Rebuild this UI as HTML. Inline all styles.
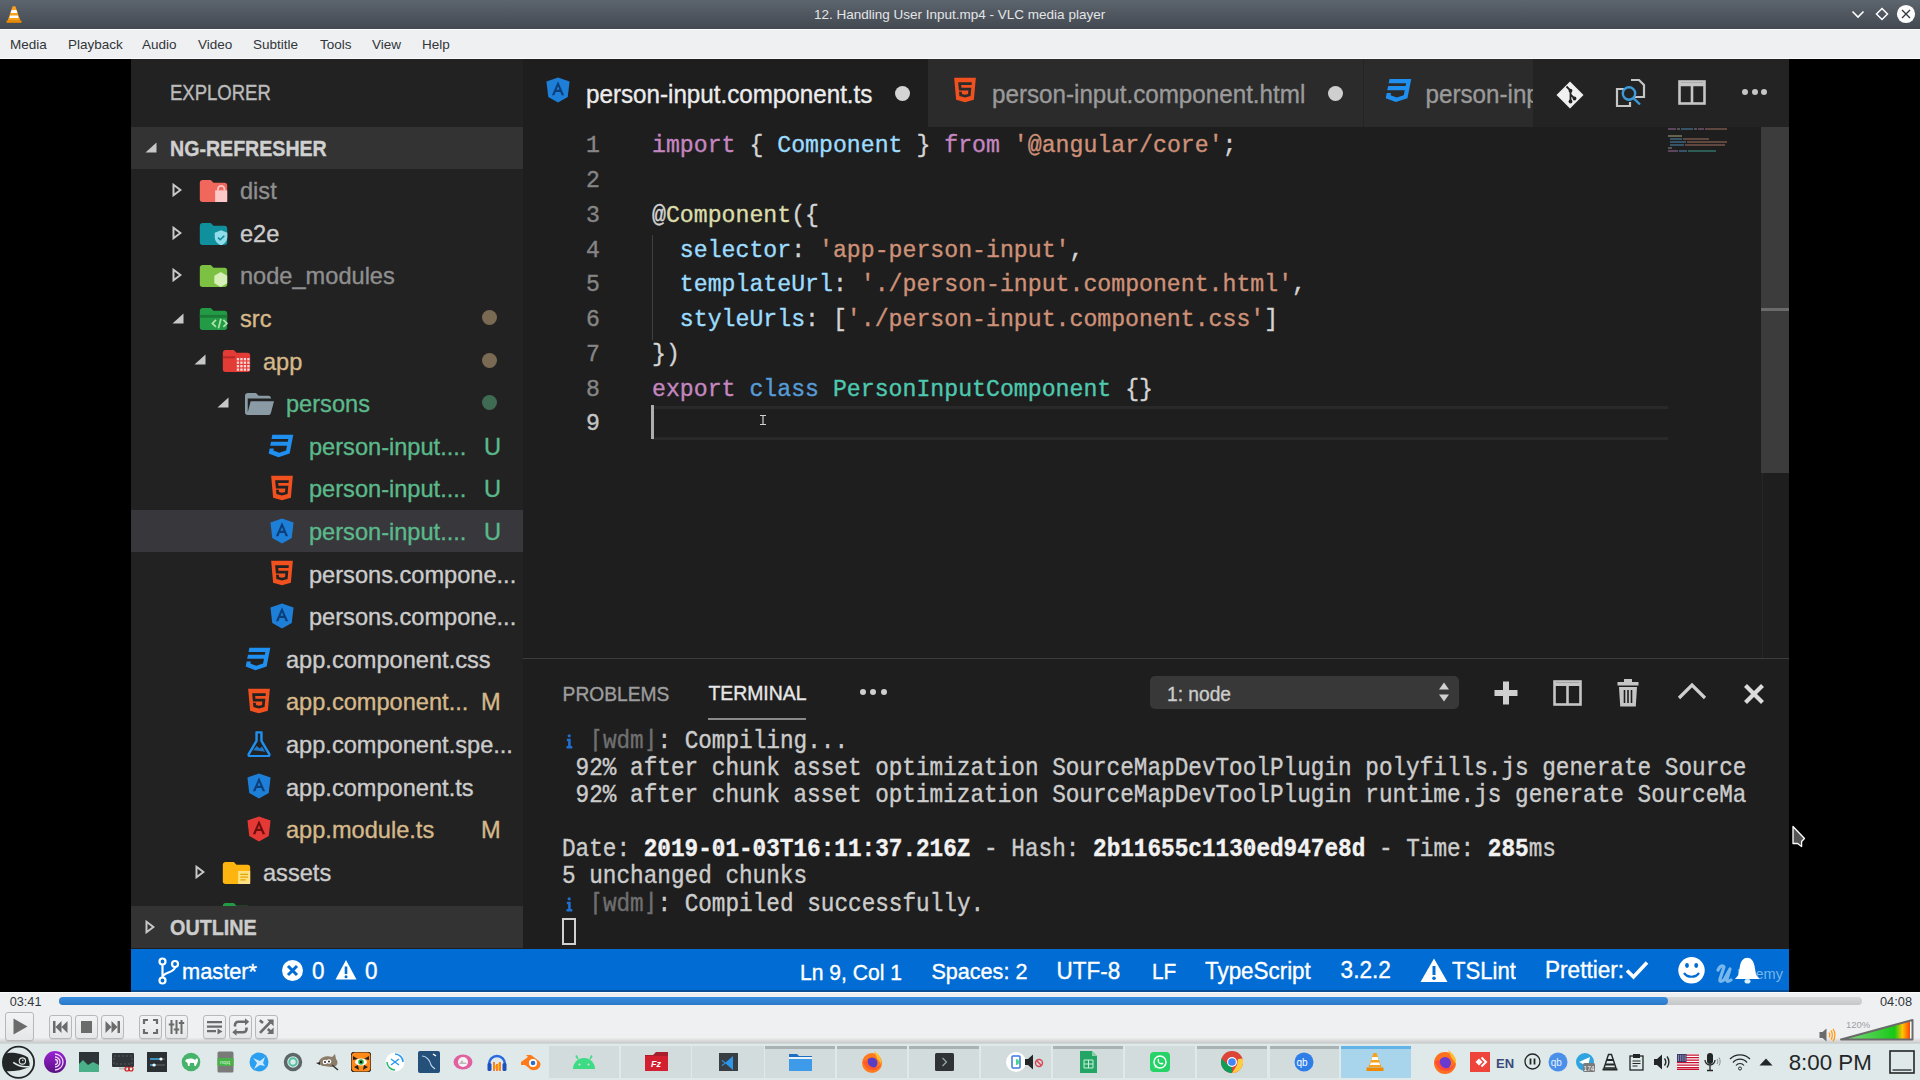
<!DOCTYPE html>
<html><head><meta charset="utf-8">
<style>
*{margin:0;padding:0;box-sizing:border-box}
html,body{width:1920px;height:1080px;overflow:hidden;background:#000;font-family:"Liberation Sans",sans-serif;position:relative}
.a{position:absolute}
.t{position:absolute;white-space:pre;line-height:1}
.mono{font-family:"Liberation Mono",monospace}
.vs{-webkit-text-stroke:0.35px currentColor}
</style></head><body>
<div class="a" style="left:0px;top:0px;width:1920px;height:29px;background:linear-gradient(#5c646d,#434951);"></div>
<div class="t " style="left:814px;top:7.57px;font-size:13.5px;color:#e3e5e7;">12. Handling User Input.mp4 - VLC media player</div>
<div class="a" style="left:0px;top:29px;width:1920px;height:30px;background:#eff0f1;border-top:1px solid #fcfcfc;border-bottom:1px solid #fafafa"></div>
<div class="t " style="left:10px;top:37.77px;font-size:13.5px;color:#31363b;">Media</div>
<div class="t " style="left:68px;top:37.77px;font-size:13.5px;color:#31363b;">Playback</div>
<div class="t " style="left:142px;top:37.77px;font-size:13.5px;color:#31363b;">Audio</div>
<div class="t " style="left:198px;top:37.77px;font-size:13.5px;color:#31363b;">Video</div>
<div class="t " style="left:253px;top:37.77px;font-size:13.5px;color:#31363b;">Subtitle</div>
<div class="t " style="left:320px;top:37.77px;font-size:13.5px;color:#31363b;">Tools</div>
<div class="t " style="left:372px;top:37.77px;font-size:13.5px;color:#31363b;">View</div>
<div class="t " style="left:422px;top:37.77px;font-size:13.5px;color:#31363b;">Help</div>
<div class="a" style="left:0px;top:59px;width:1920px;height:933px;background:#000;"></div>
<div class="a" style="left:131px;top:59px;width:1658px;height:933px;background:#1e1e1e;"></div>
<div class="a" style="left:131px;top:59px;width:392px;height:889px;background:#222222;"></div>
<div class="a" style="left:131px;top:127px;width:392px;height:42px;background:#333333;"></div>
<div class="a" style="left:131px;top:509.5px;width:392px;height:42.5px;background:#37373c;"></div>
<div class="a" style="left:131px;top:906px;width:392px;height:42px;background:#333333;"></div>
<div class="a" style="left:523px;top:59px;width:1266px;height:68px;background:#232323;"></div>
<div class="a" style="left:523px;top:59px;width:405px;height:68px;background:#1e1e1e;"></div>
<div class="a" style="left:928px;top:59px;width:436px;height:68px;background:#2b2b2b;"></div>
<div class="a" style="left:1364px;top:59px;width:169px;height:68px;background:#2b2b2b;"></div>
<div class="a" style="left:1363px;top:59px;width:1px;height:68px;background:#242424;"></div>
<div class="a" style="left:1761px;top:127px;width:28px;height:346px;background:#3c3c3c;"></div>
<div class="a" style="left:1762px;top:473px;width:1px;height:185px;background:#262626;"></div>
<div class="a" style="left:1761px;top:308px;width:28px;height:3px;background:#6b6b6b;"></div>
<div class="a" style="left:523px;top:658px;width:1266px;height:1px;background:#3c3c3c;"></div>
<div class="a" style="left:131px;top:948.5px;width:1658px;height:42.5px;background:#016cd3;"></div>
<div class="a" style="left:131px;top:990px;width:1658px;height:1.5px;background:#0a4f95;"></div>
<div class="t  vs" style="left:170px;top:85.34px;font-size:18.5px;color:#bbbbbb;transform:scaleY(1.15);transform-origin:0 15.66px;">EXPLORER</div>
<div class="t  vs" style="left:170px;top:139.61px;font-size:19.6px;color:#d0d0d0;font-weight:bold;transform:scaleY(1.1);transform-origin:0 16.59px;">NG-REFRESHER</div>
<div class="t  vs" style="left:240px;top:180.22px;font-size:23.6px;color:#8f8f8f;">dist</div>
<div class="t  vs" style="left:240px;top:222.82px;font-size:23.6px;color:#cccccc;">e2e</div>
<div class="t  vs" style="left:240px;top:265.42px;font-size:23.6px;color:#8f8f8f;">node_modules</div>
<div class="t  vs" style="left:240px;top:308.02px;font-size:23.6px;color:#d6b98a;">src</div>
<div class="a" style="left:482px;top:310.0px;width:15px;height:15px;border-radius:50%;background:#7b6a53"></div>
<div class="t  vs" style="left:263px;top:350.62px;font-size:23.6px;color:#d6b98a;">app</div>
<div class="a" style="left:482px;top:352.6px;width:15px;height:15px;border-radius:50%;background:#7b6a53"></div>
<div class="t  vs" style="left:286px;top:393.22px;font-size:23.6px;color:#5bb98b;">persons</div>
<div class="a" style="left:482px;top:395.2px;width:15px;height:15px;border-radius:50%;background:#3f6b53"></div>
<div class="t  vs" style="left:309px;top:435.82px;font-size:23.6px;color:#5bb98b;">person-input....</div>
<div class="t  vs" style="left:484px;top:435.82px;font-size:23.6px;color:#5bb98b;">U</div>
<div class="t  vs" style="left:309px;top:478.42px;font-size:23.6px;color:#5bb98b;">person-input....</div>
<div class="t  vs" style="left:484px;top:478.42px;font-size:23.6px;color:#5bb98b;">U</div>
<div class="t  vs" style="left:309px;top:521.02px;font-size:23.6px;color:#5bb98b;">person-input....</div>
<div class="t  vs" style="left:484px;top:521.02px;font-size:23.6px;color:#5bb98b;">U</div>
<div class="t  vs" style="left:309px;top:563.62px;font-size:23.6px;color:#cccccc;">persons.compone...</div>
<div class="t  vs" style="left:309px;top:606.22px;font-size:23.6px;color:#cccccc;">persons.compone...</div>
<div class="t  vs" style="left:286px;top:648.82px;font-size:23.6px;color:#cccccc;">app.component.css</div>
<div class="t  vs" style="left:286px;top:691.42px;font-size:23.6px;color:#d6b98a;">app.component...</div>
<div class="t  vs" style="left:481px;top:691.42px;font-size:23.6px;color:#d6b98a;">M</div>
<div class="t  vs" style="left:286px;top:734.02px;font-size:23.6px;color:#cccccc;">app.component.spe...</div>
<div class="t  vs" style="left:286px;top:776.62px;font-size:23.6px;color:#cccccc;">app.component.ts</div>
<div class="t  vs" style="left:286px;top:819.22px;font-size:23.6px;color:#d6b98a;">app.module.ts</div>
<div class="t  vs" style="left:481px;top:819.22px;font-size:23.6px;color:#d6b98a;">M</div>
<div class="t  vs" style="left:263px;top:861.82px;font-size:23.6px;color:#cccccc;">assets</div>
<div class="t  vs" style="left:170px;top:918.64px;font-size:19.8px;color:#cccccc;font-weight:bold;transform:scaleY(1.1);transform-origin:0 16.76px;">OUTLINE</div>
<div class="t  vs" style="left:586px;top:83.01px;font-size:24.2px;color:#ececec;transform:scaleY(1.08);transform-origin:0 20.49px;">person-input.component.ts</div>
<div class="t  vs" style="left:992px;top:83.01px;font-size:24.2px;color:#9a9a9a;transform:scaleY(1.08);transform-origin:0 20.49px;">person-input.component.html</div>
<div class="a" style="left:1364px;top:59px;width:169px;height:68px;overflow:hidden">
<div class="t  vs" style="left:61.5px;top:24.01px;font-size:24.2px;color:#9a9a9a;transform:scaleY(1.08);transform-origin:0 20.49px;">person-input.component.css</div>
</div>
<div class="a" style="left:894.5px;top:85.5px;width:15px;height:15px;border-radius:50%;background:#d4d4d4"></div>
<div class="a" style="left:1327.5px;top:85.5px;width:15px;height:15px;border-radius:50%;background:#cfcfcf"></div>
<div class="t mono vs" style="left:586.07px;top:135.42px;font-size:23.2px;color:#858585;transform:scaleY(1.05);transform-origin:0 17.78px;">1</div>
<div class="t mono vs" style="left:586.07px;top:170.17px;font-size:23.2px;color:#858585;transform:scaleY(1.05);transform-origin:0 17.78px;">2</div>
<div class="t mono vs" style="left:586.07px;top:204.92px;font-size:23.2px;color:#858585;transform:scaleY(1.05);transform-origin:0 17.78px;">3</div>
<div class="t mono vs" style="left:586.07px;top:239.67px;font-size:23.2px;color:#858585;transform:scaleY(1.05);transform-origin:0 17.78px;">4</div>
<div class="t mono vs" style="left:586.07px;top:274.42px;font-size:23.2px;color:#858585;transform:scaleY(1.05);transform-origin:0 17.78px;">5</div>
<div class="t mono vs" style="left:586.07px;top:309.17px;font-size:23.2px;color:#858585;transform:scaleY(1.05);transform-origin:0 17.78px;">6</div>
<div class="t mono vs" style="left:586.07px;top:343.92px;font-size:23.2px;color:#858585;transform:scaleY(1.05);transform-origin:0 17.78px;">7</div>
<div class="t mono vs" style="left:586.07px;top:378.67px;font-size:23.2px;color:#858585;transform:scaleY(1.05);transform-origin:0 17.78px;">8</div>
<div class="t mono vs" style="left:586.07px;top:413.42px;font-size:23.2px;color:#c6c6c6;transform:scaleY(1.05);transform-origin:0 17.78px;">9</div>
<div class="t mono vs" style="left:652px;top:135.42px;font-size:23.2px;color:#d4d4d4;transform:scaleY(1.05);transform-origin:0 17.78px;"><span style="color:#c586c0">import</span><span style="color:#d4d4d4"> { </span><span style="color:#9cdcfe">Component</span><span style="color:#d4d4d4"> } </span><span style="color:#c586c0">from</span><span style="color:#d4d4d4"> </span><span style="color:#ce9178">&#x27;@angular/core&#x27;</span><span style="color:#d4d4d4">;</span></div>
<div class="t mono vs" style="left:652px;top:204.92px;font-size:23.2px;color:#d4d4d4;transform:scaleY(1.05);transform-origin:0 17.78px;"><span style="color:#d4d4d4">@</span><span style="color:#dcdcaa">Component</span><span style="color:#d4d4d4">({</span></div>
<div class="t mono vs" style="left:652px;top:239.67px;font-size:23.2px;color:#d4d4d4;transform:scaleY(1.05);transform-origin:0 17.78px;"><span style="color:#d4d4d4">  </span><span style="color:#9cdcfe">selector</span><span style="color:#d4d4d4">: </span><span style="color:#ce9178">&#x27;app-person-input&#x27;</span><span style="color:#d4d4d4">,</span></div>
<div class="t mono vs" style="left:652px;top:274.42px;font-size:23.2px;color:#d4d4d4;transform:scaleY(1.05);transform-origin:0 17.78px;"><span style="color:#d4d4d4">  </span><span style="color:#9cdcfe">templateUrl</span><span style="color:#d4d4d4">: </span><span style="color:#ce9178">&#x27;./person-input.component.html&#x27;</span><span style="color:#d4d4d4">,</span></div>
<div class="t mono vs" style="left:652px;top:309.17px;font-size:23.2px;color:#d4d4d4;transform:scaleY(1.05);transform-origin:0 17.78px;"><span style="color:#d4d4d4">  </span><span style="color:#9cdcfe">styleUrls</span><span style="color:#d4d4d4">: [</span><span style="color:#ce9178">&#x27;./person-input.component.css&#x27;</span><span style="color:#d4d4d4">]</span></div>
<div class="t mono vs" style="left:652px;top:343.92px;font-size:23.2px;color:#d4d4d4;transform:scaleY(1.05);transform-origin:0 17.78px;"><span style="color:#d4d4d4">})</span></div>
<div class="t mono vs" style="left:652px;top:378.67px;font-size:23.2px;color:#d4d4d4;transform:scaleY(1.05);transform-origin:0 17.78px;"><span style="color:#c586c0">export</span><span style="color:#d4d4d4"> </span><span style="color:#569cd6">class</span><span style="color:#d4d4d4"> </span><span style="color:#4ec9b0">PersonInputComponent</span><span style="color:#d4d4d4"> {}</span></div>
<div class="a" style="left:652px;top:235.45px;width:1px;height:105px;background:#404040;"></div>
<div class="a" style="left:652px;top:405.5px;width:1016px;height:3px;background:#292929;"></div>
<div class="a" style="left:652px;top:437px;width:1016px;height:3px;background:#292929;"></div>
<div class="a" style="left:651px;top:405px;width:3px;height:34px;background:#aeafad;"></div>
<div class="t  vs" style="left:562.6px;top:684.55px;font-size:19.2px;color:#9d9d9d;transform:scaleY(1.08);transform-origin:0 16.25px;">PROBLEMS</div>
<div class="t  vs" style="left:708.4px;top:684.38px;font-size:19.4px;color:#e7e7e7;transform:scaleY(1.08);transform-origin:0 16.42px;">TERMINAL</div>
<div class="a" style="left:708px;top:718px;width:98px;height:2px;background:#8a8a8a;"></div>
<div class="a" style="left:1150px;top:676px;width:309px;height:33px;border-radius:5px;background:#383838"></div>
<div class="t  vs" style="left:1167px;top:684.75px;font-size:19.2px;color:#cccccc;transform:scaleY(1.08);transform-origin:0 16.25px;">1: node</div>
<div class="t mono vs" style="left:562px;top:730.90px;font-size:22.7px;color:#cccccc;transform:scaleY(1.1);transform-origin:0 17.40px;"><span style="color:#cccccc;">  </span><span style="color:#6f6f6f;">⌈wdm⌋</span><span style="color:#cccccc;">: Compiling...</span></div>
<div class="t mono vs" style="left:562px;top:758.00px;font-size:22.7px;color:#cccccc;transform:scaleY(1.1);transform-origin:0 17.40px;"><span style="color:#cccccc;"> 92% after chunk asset optimization SourceMapDevToolPlugin polyfills.js generate Source</span></div>
<div class="t mono vs" style="left:562px;top:785.10px;font-size:22.7px;color:#cccccc;transform:scaleY(1.1);transform-origin:0 17.40px;"><span style="color:#cccccc;"> 92% after chunk asset optimization SourceMapDevToolPlugin runtime.js generate SourceMa</span></div>
<div class="t mono vs" style="left:562px;top:839.30px;font-size:22.7px;color:#cccccc;transform:scaleY(1.1);transform-origin:0 17.40px;"><span style="color:#cccccc;">Date: </span><span style="color:#f2f2f2;font-weight:bold;">2019-01-03T16:11:37.216Z</span><span style="color:#cccccc;"> - Hash: </span><span style="color:#f2f2f2;font-weight:bold;">2b11655c1130ed947e8d</span><span style="color:#cccccc;"> - Time: </span><span style="color:#f2f2f2;font-weight:bold;">285</span><span style="color:#cccccc;">ms</span></div>
<div class="t mono vs" style="left:562px;top:866.40px;font-size:22.7px;color:#cccccc;transform:scaleY(1.1);transform-origin:0 17.40px;"><span style="color:#cccccc;">5 unchanged chunks</span></div>
<div class="t mono vs" style="left:562px;top:893.50px;font-size:22.7px;color:#cccccc;transform:scaleY(1.1);transform-origin:0 17.40px;"><span style="color:#cccccc;">  </span><span style="color:#6f6f6f;">⌈wdm⌋</span><span style="color:#cccccc;">: Compiled successfully.</span></div>
<svg class="a" style="left:566px;top:734.3px;" width="7" height="15" viewBox="0 0 7 15"><circle cx="3.2" cy="1.8" r="1.6" fill="#1f6fce"/><path fill="#1f6fce" d="M0.8 4.8h3.9v7.2h1.6v2.6H0.5V12h1.6V7.3H0.8z"/></svg>
<svg class="a" style="left:566px;top:896.9px;" width="7" height="15" viewBox="0 0 7 15"><circle cx="3.2" cy="1.8" r="1.6" fill="#1f6fce"/><path fill="#1f6fce" d="M0.8 4.8h3.9v7.2h1.6v2.6H0.5V12h1.6V7.3H0.8z"/></svg>
<div class="a" style="left:562px;top:917.5px;width:14px;height:27px;border:2px solid #d0d0d0"></div>
<div class="t  vs" style="left:182px;top:961.15px;font-size:21.8px;color:#ffffff;transform:scaleY(1.04);transform-origin:0 18.45px;">master*</div>
<div class="t  vs" style="left:312px;top:960.55px;font-size:22.5px;color:#ffffff;transform:scaleY(1.04);transform-origin:0 19.05px;">0</div>
<div class="t  vs" style="left:365px;top:960.55px;font-size:22.5px;color:#ffffff;transform:scaleY(1.04);transform-origin:0 19.05px;">0</div>
<div class="t  vs" style="left:800px;top:961.74px;font-size:21.1px;color:#ffffff;transform:scaleY(1.04);transform-origin:0 17.86px;">Ln 9, Col 1</div>
<div class="t  vs" style="left:931.4px;top:961.32px;font-size:21.6px;color:#ffffff;transform:scaleY(1.04);transform-origin:0 18.28px;">Spaces: 2</div>
<div class="t  vs" style="left:1056.5px;top:960.55px;font-size:22.5px;color:#ffffff;transform:scaleY(1.04);transform-origin:0 19.05px;">UTF-8</div>
<div class="t  vs" style="left:1152px;top:961.99px;font-size:20.8px;color:#ffffff;transform:scaleY(1.04);transform-origin:0 17.61px;">LF</div>
<div class="t  vs" style="left:1205px;top:960.64px;font-size:22.4px;color:#ffffff;transform:scaleY(1.04);transform-origin:0 18.96px;">TypeScript</div>
<div class="t  vs" style="left:1340.6px;top:960.47px;font-size:22.6px;color:#ffffff;transform:scaleY(1.04);transform-origin:0 19.13px;">3.2.2</div>
<div class="t  vs" style="left:1452px;top:960.89px;font-size:22.1px;color:#ffffff;transform:scaleY(1.04);transform-origin:0 18.71px;">TSLint</div>
<div class="t  vs" style="left:1545px;top:960.47px;font-size:22.6px;color:#ffffff;transform:scaleY(1.04);transform-origin:0 19.13px;">Prettier:</div>
<div class="a" style="left:0px;top:992px;width:1920px;height:51px;background:#eff0f1;border-top:1px solid #fbfbfb"></div>
<div class="t " style="left:9.7px;top:996.05px;font-size:12.7px;color:#31363b;">03:41</div>
<div class="t " style="left:1880px;top:995.96px;font-size:12.8px;color:#31363b;">04:08</div>
<div class="a" style="left:59px;top:997px;width:1803px;height:8px;border-radius:4px;background:linear-gradient(#d6d8da,#c4c6c8)"></div>
<div class="a" style="left:59px;top:997px;width:1609px;height:8px;border-radius:4px;background:linear-gradient(#3b8ee0,#2a78c8)"></div>
<div class="a" style="left:0px;top:1038px;width:1920px;height:5px;background:linear-gradient(#eceded,#c9cbcb);"></div>
<div class="a" style="left:0px;top:1043px;width:1920px;height:37px;background:#dfe9e9;"></div>
<div class="t " style="left:1788.7px;top:1051.92px;font-size:22.3px;color:#232627;">8:00 PM</div>
<svg class="a" style="left:144.6px;top:142px;" width="12" height="11" viewBox="0 0 12 11"><path fill="#c8c8c8" d="M11.5 0.5V10.5H0.5Z"/></svg>
<svg class="a" style="left:171.5px;top:182.9px;" width="10" height="14" viewBox="0 0 10 14"><path fill="none" stroke="#c8c8c8" stroke-width="2" stroke-linejoin="miter" d="M1.5 1.8V12.2L8.4 7Z"/></svg>
<svg class="a" style="left:171.5px;top:225.5px;" width="10" height="14" viewBox="0 0 10 14"><path fill="none" stroke="#c8c8c8" stroke-width="2" stroke-linejoin="miter" d="M1.5 1.8V12.2L8.4 7Z"/></svg>
<svg class="a" style="left:171.5px;top:268.1px;" width="10" height="14" viewBox="0 0 10 14"><path fill="none" stroke="#c8c8c8" stroke-width="2" stroke-linejoin="miter" d="M1.5 1.8V12.2L8.4 7Z"/></svg>
<svg class="a" style="left:171.5px;top:313.2px;" width="12" height="11" viewBox="0 0 12 11"><path fill="#c8c8c8" d="M11.5 0.5V10.5H0.5Z"/></svg>
<svg class="a" style="left:194px;top:354.3px;" width="12" height="11" viewBox="0 0 12 11"><path fill="#c8c8c8" d="M11.5 0.5V10.5H0.5Z"/></svg>
<svg class="a" style="left:217px;top:396.90000000000003px;" width="12" height="11" viewBox="0 0 12 11"><path fill="#c8c8c8" d="M11.5 0.5V10.5H0.5Z"/></svg>
<svg class="a" style="left:194.5px;top:864.5px;" width="10" height="14" viewBox="0 0 10 14"><path fill="none" stroke="#c8c8c8" stroke-width="2" stroke-linejoin="miter" d="M1.5 1.8V12.2L8.4 7Z"/></svg>
<svg class="a" style="left:199px;top:178.9px;" width="29" height="23" viewBox="2 3.2 20 16.8"><path fill="#f0675c" d="M10 4H4c-1.11 0-2 .89-2 2v12a2 2 0 0 0 2 2h16a2 2 0 0 0 2-2V8a2 2 0 0 0-2-2h-8l-2-2z"/><path fill="#ffc8c8" d="M13.2 11.5h8.8v8.5h-8.8z"/><path fill="none" stroke="#ffc8c8" stroke-width="1.3" d="M15.2 11.8v-1.2a2.4 2.4 0 0 1 4.8 0v1.2"/></svg>
<svg class="a" style="left:199px;top:221.5px;" width="29" height="23" viewBox="2 3.2 20 16.8"><path fill="#10909c" d="M10 4H4c-1.11 0-2 .89-2 2v12a2 2 0 0 0 2 2h16a2 2 0 0 0 2-2V8a2 2 0 0 0-2-2h-8l-2-2z"/><path fill="#8fdceb" d="M17.5 9.2l4.6 1.8v3.2c0 3-2.1 5.2-4.6 6.1-2.5-.9-4.6-3.1-4.6-6.1V11z"/><path fill="none" stroke="#0f8a96" stroke-width="1.1" d="M15.3 14.6l1.6 1.6 3-3"/></svg>
<svg class="a" style="left:199px;top:264.1px;" width="29" height="23" viewBox="2 3.2 20 16.8"><path fill="#7cc142" d="M10 4H4c-1.11 0-2 .89-2 2v12a2 2 0 0 0 2 2h16a2 2 0 0 0 2-2V8a2 2 0 0 0-2-2h-8l-2-2z"/><path fill="#d6f0b8" d="M17.3 9l4.7 2.7v5.6l-4.7 2.7-4.7-2.7v-5.6z"/></svg>
<svg class="a" style="left:199px;top:306.7px;" width="29" height="23" viewBox="2 3.2 20 16.8"><path fill="#239a45" d="M10 4H4c-1.11 0-2 .89-2 2v12a2 2 0 0 0 2 2h16a2 2 0 0 0 2-2V8a2 2 0 0 0-2-2h-8l-2-2z"/><path fill="#1c7a36" d="M2 9h20v2H2z"/><path fill="none" stroke="#a8e6a8" stroke-width="1.3" d="M13.8 12.6l-2.6 2.6 2.6 2.6M19.2 12.6l2.6 2.6-2.6 2.6M17.4 11.8l-1.8 7"/></svg>
<svg class="a" style="left:222px;top:349.3px;" width="29" height="23" viewBox="2 3.2 20 16.8"><path fill="#e33b36" d="M10 4H4c-1.11 0-2 .89-2 2v12a2 2 0 0 0 2 2h16a2 2 0 0 0 2-2V8a2 2 0 0 0-2-2h-8l-2-2z"/><path fill="#b72a26" d="M2 8.5h9v1.5H2z"/><rect x="12.20" y="9.80" width="1.7" height="1.7" fill="#ffd9d9"/><rect x="14.75" y="9.80" width="1.7" height="1.7" fill="#ffd9d9"/><rect x="17.30" y="9.80" width="1.7" height="1.7" fill="#ffd9d9"/><rect x="19.85" y="9.80" width="1.7" height="1.7" fill="#ffd9d9"/><rect x="12.20" y="12.35" width="1.7" height="1.7" fill="#ffd9d9"/><rect x="14.75" y="12.35" width="1.7" height="1.7" fill="#ffd9d9"/><rect x="17.30" y="12.35" width="1.7" height="1.7" fill="#ffd9d9"/><rect x="19.85" y="12.35" width="1.7" height="1.7" fill="#ffd9d9"/><rect x="12.20" y="14.90" width="1.7" height="1.7" fill="#ffd9d9"/><rect x="14.75" y="14.90" width="1.7" height="1.7" fill="#ffd9d9"/><rect x="17.30" y="14.90" width="1.7" height="1.7" fill="#ffd9d9"/><rect x="19.85" y="14.90" width="1.7" height="1.7" fill="#ffd9d9"/><rect x="12.20" y="17.45" width="1.7" height="1.7" fill="#ffd9d9"/><rect x="14.75" y="17.45" width="1.7" height="1.7" fill="#ffd9d9"/><rect x="17.30" y="17.45" width="1.7" height="1.7" fill="#ffd9d9"/><rect x="19.85" y="17.45" width="1.7" height="1.7" fill="#ffd9d9"/></svg>
<svg class="a" style="left:245px;top:391.90000000000003px;" width="29" height="23" viewBox="2 3.2 21.2 16.8"><path fill="#8a9ba6" d="M19 20H4a2 2 0 0 1-2-2V6c0-1.11.89-2 2-2h6l2 2h7a2 2 0 0 1 2 2H4v10l2.14-8h17.07l-2.28 8.5c-.23.87-1.01 1.5-1.93 1.5z"/></svg>
<svg class="a" style="left:222px;top:860.5px;" width="29" height="23" viewBox="2 3.2 20 16.8"><path fill="#ffb50f" d="M10 4H4c-1.11 0-2 .89-2 2v12a2 2 0 0 0 2 2h16a2 2 0 0 0 2-2V8a2 2 0 0 0-2-2h-8l-2-2z"/><path fill="#ffe082" d="M13.2 10.5h8.8v9.5h-8.8z"/><path stroke="#e0a800" stroke-width="0.9" d="M14.8 13h5.6M14.8 15h5.6M14.8 17h4"/></svg>
<div class="a" style="left:131px;top:900px;width:392px;height:6px;overflow:hidden">
<svg class="a" style="left:91px;top:2px;" width="29" height="23" viewBox="2 3.2 20 16.8"><path fill="#239a45" d="M10 4H4c-1.11 0-2 .89-2 2v12a2 2 0 0 0 2 2h16a2 2 0 0 0 2-2V8a2 2 0 0 0-2-2h-8l-2-2z"/></svg>
</div>
<svg class="a" style="left:268px;top:432.50000000000006px;" width="26" height="26" viewBox="1.5 2.5 21 19"><path fill="#1f8ff0" d="M5 3l-.65 3.34h13.59L17.5 8.5H3.92l-.66 3.33h13.59l-.76 3.81-5.48 1.81-4.75-1.81.33-1.64H2.85l-.79 4 7.85 3 9.05-3 1.2-6.03.24-1.21L21.94 3H5z"/></svg>
<svg class="a" style="left:268.5px;top:475.09999999999997px;" width="26" height="26" viewBox="2.5 2.5 19 19"><path fill="#f0511f" d="M12 17.56l4.07-1.13.55-6.1H9.38L9.2 8.3h7.6l.2-1.99H7l.56 6.01h6.89l-.23 2.58-2.22.6-2.22-.6-.14-1.66h-2l.29 3.19L12 17.56M4.07 3h15.86L18.5 19.2 12 21l-6.5-1.8L4.07 3z"/></svg>
<svg class="a" style="left:268.5px;top:517.6999999999999px;" width="26" height="26" viewBox="2.5 2 19 20"><path fill="#1e7fd8" d="M12 2.3l8.9 3.2-1.4 11.9L12 21.6l-7.5-4.2L3.1 5.5z"/><path fill="#0c3f7a" d="M12 5.2L7.3 16h1.9l1-2.5h3.6l1 2.5h1.9zM10.9 11.9L12 9.1l1.1 2.8z"/></svg>
<svg class="a" style="left:268.5px;top:560.3px;" width="26" height="26" viewBox="2.5 2.5 19 19"><path fill="#f0511f" d="M12 17.56l4.07-1.13.55-6.1H9.38L9.2 8.3h7.6l.2-1.99H7l.56 6.01h6.89l-.23 2.58-2.22.6-2.22-.6-.14-1.66h-2l.29 3.19L12 17.56M4.07 3h15.86L18.5 19.2 12 21l-6.5-1.8L4.07 3z"/></svg>
<svg class="a" style="left:268.5px;top:602.9px;" width="26" height="26" viewBox="2.5 2 19 20"><path fill="#1e7fd8" d="M12 2.3l8.9 3.2-1.4 11.9L12 21.6l-7.5-4.2L3.1 5.5z"/><path fill="#0c3f7a" d="M12 5.2L7.3 16h1.9l1-2.5h3.6l1 2.5h1.9zM10.9 11.9L12 9.1l1.1 2.8z"/></svg>
<svg class="a" style="left:245px;top:645.5px;" width="26" height="26" viewBox="1.5 2.5 21 19"><path fill="#1f8ff0" d="M5 3l-.65 3.34h13.59L17.5 8.5H3.92l-.66 3.33h13.59l-.76 3.81-5.48 1.81-4.75-1.81.33-1.64H2.85l-.79 4 7.85 3 9.05-3 1.2-6.03.24-1.21L21.94 3H5z"/></svg>
<svg class="a" style="left:245.5px;top:688.1px;" width="26" height="26" viewBox="2.5 2.5 19 19"><path fill="#f0511f" d="M12 17.56l4.07-1.13.55-6.1H9.38L9.2 8.3h7.6l.2-1.99H7l.56 6.01h6.89l-.23 2.58-2.22.6-2.22-.6-.14-1.66h-2l.29 3.19L12 17.56M4.07 3h15.86L18.5 19.2 12 21l-6.5-1.8L4.07 3z"/></svg>
<svg class="a" style="left:245.5px;top:730.7px;" width="26" height="26" viewBox="2.5 2.5 19 19"><path fill="none" stroke="#1f8ff0" stroke-width="1.8" stroke-linejoin="round" d="M9.5 3.5h5M10.2 3.5v6.2L4.6 19.2c-.5.9.1 1.8 1.1 1.8h12.6c1 0 1.6-.9 1.1-1.8L13.8 9.7V3.5"/><path fill="#1f8ff0" d="M7.6 16.5l2.8-3 2.2 1.8 1.6-1.4 2.3 3.8z" opacity=".8"/></svg>
<svg class="a" style="left:245.5px;top:773.3px;" width="26" height="26" viewBox="2.5 2 19 20"><path fill="#1e7fd8" d="M12 2.3l8.9 3.2-1.4 11.9L12 21.6l-7.5-4.2L3.1 5.5z"/><path fill="#0c3f7a" d="M12 5.2L7.3 16h1.9l1-2.5h3.6l1 2.5h1.9zM10.9 11.9L12 9.1l1.1 2.8z"/></svg>
<svg class="a" style="left:245.5px;top:815.9px;" width="26" height="26" viewBox="2.5 2 19 20"><path fill="#e53935" d="M12 2.3l8.9 3.2-1.4 11.9L12 21.6l-7.5-4.2L3.1 5.5z"/><path fill="#6d0f0f" d="M12 5.2L7.3 16h1.9l1-2.5h3.6l1 2.5h1.9zM10.9 11.9L12 9.1l1.1 2.8z"/></svg>
<svg class="a" style="left:144.5px;top:920px;" width="10" height="14" viewBox="0 0 10 14"><path fill="none" stroke="#c8c8c8" stroke-width="2" stroke-linejoin="miter" d="M1.5 1.8V12.2L8.4 7Z"/></svg>
<svg class="a" style="left:545px;top:77px;" width="26" height="26" viewBox="2.5 2 19 20"><path fill="#1e7fd8" d="M12 2.3l8.9 3.2-1.4 11.9L12 21.6l-7.5-4.2L3.1 5.5z"/><path fill="#0c3f7a" d="M12 5.2L7.3 16h1.9l1-2.5h3.6l1 2.5h1.9zM10.9 11.9L12 9.1l1.1 2.8z"/></svg>
<svg class="a" style="left:952px;top:77px;" width="26" height="26" viewBox="2.5 2.5 19 19"><path fill="#f0511f" d="M12 17.56l4.07-1.13.55-6.1H9.38L9.2 8.3h7.6l.2-1.99H7l.56 6.01h6.89l-.23 2.58-2.22.6-2.22-.6-.14-1.66h-2l.29 3.19L12 17.56M4.07 3h15.86L18.5 19.2 12 21l-6.5-1.8L4.07 3z"/></svg>
<svg class="a" style="left:1385px;top:77px;" width="27" height="27" viewBox="1.5 2.5 21 19"><path fill="#1f8ff0" d="M5 3l-.65 3.34h13.59L17.5 8.5H3.92l-.66 3.33h13.59l-.76 3.81-5.48 1.81-4.75-1.81.33-1.64H2.85l-.79 4 7.85 3 9.05-3 1.2-6.03.24-1.21L21.94 3H5z"/></svg>
<svg class="a" style="left:1555px;top:80px;" width="30" height="30" viewBox="0 0 30 30"><path fill="#f0f0f0" d="M15 1.5L28.5 15 15 28.5 1.5 15z"/><g stroke="#222" stroke-width="1.8" fill="none"><path d="M11.5 6.5l4 4v11M15.5 14.5l3.6 3.6"/></g><circle cx="15.5" cy="21.5" r="1.9" fill="#222"/><circle cx="19.5" cy="18.5" r="1.9" fill="#222"/><circle cx="15.5" cy="10.7" r="1.9" fill="#222"/></svg>
<svg class="a" style="left:1614px;top:78px;" width="32" height="30" viewBox="0 0 32 30"><g fill="none" stroke="#c5c5c5" stroke-width="2.2"><path d="M17 2h8l5 5v12h-9"/><path d="M10 11H3v17h13v-4"/></g><g fill="none" stroke="#3c9ad8" stroke-width="2.4"><circle cx="15" cy="15.5" r="6.2"/><path d="M19.5 20.2l6.5 6.3"/></g></svg>
<svg class="a" style="left:1678px;top:80px;" width="28" height="25" viewBox="0 0 28 25"><rect x="1.5" y="1.5" width="25" height="22" fill="none" stroke="#c5c5c5" stroke-width="2.6"/><path d="M1.5 4.5h25" stroke="#c5c5c5" stroke-width="3.5"/><path d="M14 3v21" stroke="#c5c5c5" stroke-width="2.6"/></svg>
<div class="a" style="left:1742px;top:89px;width:6px;height:6px;border-radius:50%;background:#c5c5c5"></div>
<div class="a" style="left:1751.5px;top:89px;width:6px;height:6px;border-radius:50%;background:#c5c5c5"></div>
<div class="a" style="left:1761px;top:89px;width:6px;height:6px;border-radius:50%;background:#c5c5c5"></div>
<div class="a" style="left:1668px;top:127.5px;width:8px;height:2px;background:#9a6a9a;opacity:.5"></div>
<div class="a" style="left:1677px;top:127.5px;width:3px;height:2px;background:#888;opacity:.5"></div>
<div class="a" style="left:1681px;top:127.5px;width:12px;height:2px;background:#4e88b0;opacity:.5"></div>
<div class="a" style="left:1694px;top:127.5px;width:3px;height:2px;background:#888;opacity:.5"></div>
<div class="a" style="left:1698px;top:127.5px;width:6px;height:2px;background:#9a6a9a;opacity:.5"></div>
<div class="a" style="left:1705px;top:127.5px;width:22px;height:2px;background:#a07060;opacity:.5"></div>
<div class="a" style="left:1668px;top:134.5px;width:14px;height:2px;background:#a8a880;opacity:.5"></div>
<div class="a" style="left:1670px;top:137.5px;width:12px;height:2px;background:#4e88b0;opacity:.5"></div>
<div class="a" style="left:1683px;top:137.5px;width:26px;height:2px;background:#a07060;opacity:.5"></div>
<div class="a" style="left:1670px;top:140.5px;width:16px;height:2px;background:#4e88b0;opacity:.5"></div>
<div class="a" style="left:1687px;top:140.5px;width:40px;height:2px;background:#a07060;opacity:.5"></div>
<div class="a" style="left:1670px;top:143.5px;width:14px;height:2px;background:#4e88b0;opacity:.5"></div>
<div class="a" style="left:1685px;top:143.5px;width:40px;height:2px;background:#a07060;opacity:.5"></div>
<div class="a" style="left:1668px;top:146.5px;width:4px;height:2px;background:#888;opacity:.5"></div>
<div class="a" style="left:1668px;top:149.5px;width:10px;height:2px;background:#9a6a9a;opacity:.5"></div>
<div class="a" style="left:1679px;top:149.5px;width:8px;height:2px;background:#4e88b0;opacity:.5"></div>
<div class="a" style="left:1688px;top:149.5px;width:28px;height:2px;background:#3a9a88;opacity:.5"></div>
<svg class="a" style="left:758px;top:413px;" width="10" height="14" viewBox="0 0 10 14"><path d="M2 2.5h6M5 2.5v9M2 11.5h6" stroke="#d0d0d0" stroke-width="1.2" fill="none"/></svg>
<div class="a" style="left:859.5px;top:689px;width:6px;height:6px;border-radius:50%;background:#cfcfcf"></div>
<div class="a" style="left:870px;top:689px;width:6px;height:6px;border-radius:50%;background:#cfcfcf"></div>
<div class="a" style="left:880.5px;top:689px;width:6px;height:6px;border-radius:50%;background:#cfcfcf"></div>
<svg class="a" style="left:1438px;top:681px;" width="12" height="22" viewBox="0 0 12 22"><path fill="#d0d0d0" d="M6 1.5L11 8.5H1zM6 20.5L11 13.5H1z"/></svg>
<svg class="a" style="left:1493px;top:680px;" width="26" height="26" viewBox="0 0 26 26"><path fill="#cfcfcf" d="M10 1.5h6v8.5h8.5v6H16v8.5h-6V16H1.5v-6H10z"/></svg>
<svg class="a" style="left:1553px;top:680px;" width="30" height="26" viewBox="0 0 30 26"><rect x="1.5" y="1.5" width="26" height="23" fill="none" stroke="#c5c5c5" stroke-width="2.6"/><path d="M1.5 4.5h26" stroke="#c5c5c5" stroke-width="3"/><path d="M14.5 3v21" stroke="#c5c5c5" stroke-width="2.6"/></svg>
<svg class="a" style="left:1616px;top:678px;" width="24" height="30" viewBox="0 0 24 30"><path fill="#c5c5c5" d="M8 1h8v3h6.5v3.5h-21V4H8z"/><path fill="#c5c5c5" d="M3 9h18l-1.2 19.5H4.2z"/><path stroke="#1e1e1e" stroke-width="1.6" d="M8.5 12v13M12 12v13M15.5 12v13"/></svg>
<svg class="a" style="left:1677px;top:682px;" width="30" height="18" viewBox="0 0 30 18"><path fill="none" stroke="#cfcfcf" stroke-width="3.2" d="M2 16L15 3l13 13"/></svg>
<svg class="a" style="left:1743px;top:683px;" width="22" height="22" viewBox="0 0 22 22"><path fill="none" stroke="#dcdcdc" stroke-width="4.2" d="M2.5 2.5l17 17M19.5 2.5l-17 17"/></svg>
<svg class="a" style="left:158px;top:957px;" width="22" height="28" viewBox="0 0 22 28"><g fill="none" stroke="#fff" stroke-width="2.2"><circle cx="4.5" cy="4.5" r="3"/><circle cx="4.5" cy="23.5" r="3"/><circle cx="17" cy="7" r="3"/><path d="M4.5 7.5v13M17 10c0 6-12.5 5-12.5 10.5"/></g></svg>
<svg class="a" style="left:281px;top:959px;" width="23" height="23" viewBox="0 0 23 23"><circle cx="11.5" cy="11.5" r="10.5" fill="#fff"/><path stroke="#016cd3" stroke-width="3" d="M7 7l9 9M16 7l-9 9"/></svg>
<svg class="a" style="left:335px;top:959px;" width="22" height="22" viewBox="0 0 22 22"><path fill="#fff" d="M11 1L21.5 20.5H0.5z"/><path stroke="#016cd3" stroke-width="2.6" d="M11 7.5v7.5"/><circle cx="11" cy="17.7" r="1.5" fill="#016cd3"/></svg>
<svg class="a" style="left:1419px;top:957px;" width="30" height="26" viewBox="0 0 30 26"><path fill="#fff" d="M15 1.5L28.5 25H1.5z"/><path stroke="#016cd3" stroke-width="3" d="M15 9v9"/><circle cx="15" cy="21.3" r="1.8" fill="#016cd3"/></svg>
<svg class="a" style="left:1625px;top:960px;" width="24" height="20" viewBox="0 0 24 20"><path fill="none" stroke="#fff" stroke-width="3.6" d="M2 10.5l6.5 6.5L22 2.5"/></svg>
<svg class="a" style="left:1677px;top:956px;" width="30" height="30" viewBox="0 0 30 30"><circle cx="14.5" cy="14.3" r="13.2" fill="#fff"/><ellipse cx="10" cy="9.5" rx="1.9" ry="2.4" fill="#016cd3"/><ellipse cx="19.2" cy="9.5" rx="1.9" ry="2.4" fill="#016cd3"/><path d="M7 17c3.5 5 11.5 5 15 0" stroke="#016cd3" stroke-width="2.2" fill="none"/></svg>
<svg class="a" style="left:1714px;top:960px;" width="30" height="26" viewBox="0 0 30 26"><path d="M4 10q3-6 6-3l-4 12q-1 4 4 1l6-11-3 10q-1 4 4 1" stroke="rgba(140,196,240,.85)" stroke-width="3.2" fill="none" stroke-linecap="round" stroke-linejoin="round"/></svg>
<div class="t " style="left:1737px;top:967.23px;font-size:14.5px;color:rgba(150,200,240,.8);">Udemy</div>
<svg class="a" style="left:1735px;top:957px;" width="25" height="28" viewBox="0 0 25 28"><path fill="#fff" d="M12.5 0.8c3.6 0 6 3 7 8l1.6 9.2 3.4 4H0l3.4-4 1.6-9.2c1-5 3.4-8 7.5-8z"/><ellipse cx="12.5" cy="24.3" rx="3" ry="2.3" fill="#d8f0ff"/></svg>
<svg class="a" style="left:6px;top:5px;" width="16" height="18" viewBox="0 0 16 18"><path fill="#f7a11c" d="M6.6 1.2h2.8l5 14.5H1.6z"/><path fill="#fff" d="M5.6 5h4.8l1 3H4.6z"/><path fill="#fff" d="M4.2 10.5h7.6l.8 2.4H3.4z"/><path fill="#ef8a00" d="M0.5 15.5h15v2.3H0.5z"/></svg>
<svg class="a" style="left:1851px;top:9px;" width="14" height="11" viewBox="0 0 14 11"><path fill="none" stroke="#fff" stroke-width="1.6" d="M1.5 2.5l5.5 5.5 5.5-5.5"/></svg>
<svg class="a" style="left:1875px;top:7px;" width="14" height="14" viewBox="0 0 14 14"><path fill="none" stroke="#fff" stroke-width="1.5" d="M7 1.5L12.5 7 7 12.5 1.5 7z"/></svg>
<svg class="a" style="left:1896px;top:4px;" width="20" height="20" viewBox="0 0 20 20"><circle cx="10" cy="10" r="9.1" fill="#fcfcfc"/><path stroke="#31363b" stroke-width="1.3" d="M6 6l8 8M14 6l-8 8"/></svg>
<div class="a" style="left:4.5px;top:1012px;width:29.0px;height:29px;border:1px solid #b6b8ba;border-radius:3px;background:linear-gradient(#f2f3f4,#e6e7e8);box-shadow:0 1px 0 rgba(0,0,0,.08)"></div>
<svg class="a" style="left:4.5px;top:1012px;" width="29.0" height="29" viewBox="0 0 29.0 29"><path fill="#6b6b6b" d="M8.5 6.5L22.5 14.5 8.5 22.5z"/></svg>
<div class="a" style="left:48.5px;top:1015px;width:23.0px;height:24px;border:1px solid #b6b8ba;border-radius:3px;background:linear-gradient(#f2f3f4,#e6e7e8);box-shadow:0 1px 0 rgba(0,0,0,.08)"></div>
<svg class="a" style="left:48.5px;top:1015px;" width="23.0" height="24" viewBox="0 0 23.0 24"><path fill="#6b6b6b" d="M4 6h2.5v12H4zM6.5 12l6-6v12zM12.5 12l6-6v12z"/></svg>
<div class="a" style="left:74.5px;top:1015px;width:23.0px;height:24px;border:1px solid #b6b8ba;border-radius:3px;background:linear-gradient(#f2f3f4,#e6e7e8);box-shadow:0 1px 0 rgba(0,0,0,.08)"></div>
<svg class="a" style="left:74.5px;top:1015px;" width="23.0" height="24" viewBox="0 0 23.0 24"><path fill="#6b6b6b" d="M6 6h11v12H6z"/></svg>
<div class="a" style="left:100.5px;top:1015px;width:23.0px;height:24px;border:1px solid #b6b8ba;border-radius:3px;background:linear-gradient(#f2f3f4,#e6e7e8);box-shadow:0 1px 0 rgba(0,0,0,.08)"></div>
<svg class="a" style="left:100.5px;top:1015px;" width="23.0" height="24" viewBox="0 0 23.0 24"><path fill="#6b6b6b" d="M4.5 6l6 6-6 6zM10.5 6l6 6-6 6zM16.5 6H19v12h-2.5z"/></svg>
<div class="a" style="left:138.5px;top:1015px;width:23.0px;height:24px;border:1px solid #b6b8ba;border-radius:3px;background:linear-gradient(#f2f3f4,#e6e7e8);box-shadow:0 1px 0 rgba(0,0,0,.08)"></div>
<svg class="a" style="left:138.5px;top:1015px;" width="23.0" height="24" viewBox="0 0 23.0 24"><path fill="none" stroke="#6b6b6b" stroke-width="2.2" d="M5 9V5h4M14 5h4v4M18 14v4h-4M9 18H5v-4"/></svg>
<div class="a" style="left:164.5px;top:1015px;width:23.0px;height:24px;border:1px solid #b6b8ba;border-radius:3px;background:linear-gradient(#f2f3f4,#e6e7e8);box-shadow:0 1px 0 rgba(0,0,0,.08)"></div>
<svg class="a" style="left:164.5px;top:1015px;" width="23.0" height="24" viewBox="0 0 23.0 24"><g fill="#6b6b6b"><path d="M5.5 5h2v14h-2zM10.5 5h2v14h-2zM15.5 5h2v14h-2z"/><path d="M3.8 8.5h5.4v2H3.8zM8.8 13.5h5.4v2H8.8zM13.8 7h5.4v2h-5.4z"/></g></svg>
<div class="a" style="left:202.5px;top:1015px;width:23.0px;height:24px;border:1px solid #b6b8ba;border-radius:3px;background:linear-gradient(#f2f3f4,#e6e7e8);box-shadow:0 1px 0 rgba(0,0,0,.08)"></div>
<svg class="a" style="left:202.5px;top:1015px;" width="23.0" height="24" viewBox="0 0 23.0 24"><g fill="#6b6b6b"><path d="M4 6h15v2.2H4zM4 10.5h15v2.2H4zM4 15h9v2.2H4z"/><path d="M14.5 13.5l5 3-5 3z"/></g></svg>
<div class="a" style="left:228.5px;top:1015px;width:23.0px;height:24px;border:1px solid #b6b8ba;border-radius:3px;background:linear-gradient(#f2f3f4,#e6e7e8);box-shadow:0 1px 0 rgba(0,0,0,.08)"></div>
<svg class="a" style="left:228.5px;top:1015px;" width="23.0" height="24" viewBox="0 0 23.0 24"><g fill="none" stroke="#6b6b6b" stroke-width="2.6"><path d="M6 11.5V10a3.2 3.2 0 0 1 3.2-3.2H17"/><path d="M17.5 12.5V14a3.2 3.2 0 0 1-3.2 3.2H6.5"/></g><path fill="#6b6b6b" d="M16 3.2l4.2 3.6-4.2 3.6zM7.5 13.6l-4.2 3.6 4.2 3.6z"/></svg>
<div class="a" style="left:254.5px;top:1015px;width:23.0px;height:24px;border:1px solid #b6b8ba;border-radius:3px;background:linear-gradient(#f2f3f4,#e6e7e8);box-shadow:0 1px 0 rgba(0,0,0,.08)"></div>
<svg class="a" style="left:254.5px;top:1015px;" width="23.0" height="24" viewBox="0 0 23.0 24"><g fill="none" stroke="#6b6b6b" stroke-width="2.6"><path d="M4.8 5.2l3.2 2.8M5 17.8L16 6.5M12.8 14l3 2.8"/></g><path fill="#6b6b6b" d="M12 4.6h6.6v6.6zM18.6 12.4V19H12z"/></svg>
<svg class="a" style="left:1818px;top:1027px;" width="18" height="16" viewBox="0 0 18 16"><path fill="#6b6b6b" d="M1.5 5h3l4-3.5v13l-4-3.5h-3z"/><g fill="none" stroke="#ff9a1a" stroke-width="1.3"><path d="M11 5.5c1 1.5 1 3.5 0 5"/><path d="M13 3.5c1.8 2.5 1.8 6.5 0 9"/><path d="M15 1.8c2.5 3.5 2.5 9 0 12.5"/></g></svg>
<svg class="a" style="left:1839px;top:1018px;" width="76" height="25" viewBox="0 0 76 25"><defs><linearGradient id="vg" x1="0" x2="1"><stop offset="0" stop-color="#8ad88a"/><stop offset=".75" stop-color="#16c916"/><stop offset=".86" stop-color="#ffc400"/><stop offset=".96" stop-color="#ff4a0a"/><stop offset=".961" stop-color="#fff"/></linearGradient></defs><path fill="url(#vg)" stroke="#6a6a6a" stroke-width="2" stroke-linejoin="round" d="M2 21.5L73.5 2v19.5z"/></svg>
<div class="t " style="left:1846px;top:1019.96px;font-size:9.5px;color:#9aa0a6;">120%</div>
<svg class="a" style="left:1788px;top:822px;" width="22" height="30" viewBox="0 0 22 30"><path fill="#555" stroke="#fff" stroke-width="1.3" stroke-linejoin="round" d="M5 4.5L16.5 16.5 13.6 19.5V24.5L9.5 21.5H5z"/></svg>
<div class="a" style="left:0px;top:1043px;width:1920px;height:1px;background:#cfd6d6;"></div>
<div class="a" style="left:549px;top:1046px;width:70px;height:31.5px;background:#d3dcdc;"></div>
<div class="a" style="left:620.5px;top:1046px;width:70.5px;height:31.5px;background:#d3dcdc;"></div>
<div class="a" style="left:692px;top:1046px;width:72px;height:31.5px;background:#d3dcdc;"></div>
<div class="a" style="left:765px;top:1046px;width:70px;height:31.5px;background:#d3dcdc;"></div>
<div class="a" style="left:765px;top:1046px;width:70px;height:3px;background:#a9b3b3;"></div>
<div class="a" style="left:837px;top:1046px;width:70px;height:31.5px;background:#d3dcdc;"></div>
<div class="a" style="left:837px;top:1046px;width:70px;height:3px;background:#a9b3b3;"></div>
<div class="a" style="left:909px;top:1046px;width:70px;height:31.5px;background:#d3dcdc;"></div>
<div class="a" style="left:909px;top:1046px;width:70px;height:3px;background:#a9b3b3;"></div>
<div class="a" style="left:981px;top:1046px;width:70px;height:31.5px;background:#d3dcdc;"></div>
<div class="a" style="left:1053px;top:1046px;width:70px;height:31.5px;background:#d3dcdc;"></div>
<div class="a" style="left:1053px;top:1046px;width:70px;height:3px;background:#a9b3b3;"></div>
<div class="a" style="left:1125px;top:1046px;width:70px;height:31.5px;background:#d3dcdc;"></div>
<div class="a" style="left:1197px;top:1046px;width:70px;height:31.5px;background:#d3dcdc;"></div>
<div class="a" style="left:1197px;top:1046px;width:70px;height:3px;background:#a9b3b3;"></div>
<div class="a" style="left:1269.5px;top:1046px;width:69.5px;height:31.5px;background:#d3dcdc;"></div>
<div class="a" style="left:1269.5px;top:1046px;width:69.5px;height:3px;background:#a9b3b3;"></div>
<div class="a" style="left:1341px;top:1046px;width:70px;height:31.5px;background:#a9d5ec;"></div>
<div class="a" style="left:1341px;top:1046px;width:70px;height:3px;background:#62b3e6;"></div>
<svg class="a" style="left:0.5px;top:1044.5px;" width="35" height="35" viewBox="0 0 35 35"><circle cx="17.5" cy="17.3" r="15.6" fill="none" stroke="#232627" stroke-width="1.8"/><path fill="#232627" d="M4.8 8.4C10 6.8 22 8.5 27 12.5L28.6 18.5 28.2 22C22 25 14 26.5 4.8 26.2A15.6 15.6 0 0 1 4.8 8.4z"/><circle cx="21.4" cy="16" r="3.7" fill="#dfe9e9"/><circle cx="21.4" cy="16" r="2.6" fill="#232627"/><circle cx="21.8" cy="15.2" r=".8" fill="#dfe9e9"/><path d="M12.2 17.4Q19.5 22.8 28.3 21.6" stroke="#dfe9e9" stroke-width="1.4" fill="none"/></svg>
<svg class="a" style="left:43.0px;top:1049.5px;" width="24" height="24" viewBox="0 0 24 24"><defs><linearGradient id="torg" x1="0" y1="0" x2="0" y2="1"><stop offset="0" stop-color="#9a22d4"/><stop offset="1" stop-color="#5a1182"/></linearGradient></defs><circle cx="12" cy="12" r="11" fill="url(#torg)"/><path d="M12 4a8 8 0 0 1 0 16M12 7a5 5 0 0 1 0 10M12 9.5a2.5 2.5 0 0 1 0 5" stroke="#f0d9ff" stroke-width="1.3" fill="none"/></svg>
<svg class="a" style="left:79.0px;top:1051.5px;" width="20" height="20" viewBox="0 0 20 20"><rect width="20" height="20" fill="#2e3538"/><path fill="#4ab08a" d="M0 20V12l4-4 5 5 5-3 6 3v7z"/></svg>
<svg class="a" style="left:111.0px;top:1051.5px;" width="24" height="20" viewBox="0 0 24 20"><rect x="1" y="1" width="22" height="14" rx="1" fill="#2f3539"/><path d="M3 4h18v8H3z" fill="none" stroke="#666" stroke-width=".8" stroke-dasharray="2 2"/><rect x="8" y="15.5" width="8" height="2" fill="#bbb"/><circle cx="16" cy="17" r="2" fill="none" stroke="#d02020" stroke-width="1.2"/><circle cx="20" cy="17" r="2" fill="none" stroke="#d02020" stroke-width="1.2"/></svg>
<svg class="a" style="left:147.0px;top:1051.5px;" width="20" height="20" viewBox="0 0 20 20"><rect width="20" height="20" fill="#2b3033"/><path stroke="#3daee9" stroke-width="1.5" d="M3 7h12M3 13h6"/><path stroke="#555" stroke-width="1.5" d="M15 7h3M9 13h9"/><circle cx="14" cy="7" r="1.6" fill="#fff"/><circle cx="7" cy="13" r="1.6" fill="#fff"/></svg>
<svg class="a" style="left:181.0px;top:1051.5px;" width="20" height="20" viewBox="0 0 20 20"><circle cx="10" cy="10" r="9.3" fill="#47b36a"/><path fill="#fff" d="M4 9c2-3 7-3 10-1l2-2 1 2c0 3-2 4-2 6h-1.5l-.5-3h-4l-.5 3H7l-.5-3z"/></svg>
<svg class="a" style="left:216.5px;top:1050.5px;" width="17" height="22" viewBox="0 0 17 22"><rect x=".5" y=".5" width="16" height="21" rx="1.5" fill="#7a7a7a"/><rect x=".5" y="7" width="16" height="8" fill="#4ab04a"/><text x="3" y="13" font-size="6" fill="#d0ffd0" font-family="Liberation Sans">nqq</text></svg>
<svg class="a" style="left:249.0px;top:1051.5px;" width="20" height="20" viewBox="0 0 20 20"><circle cx="10" cy="10" r="9.5" fill="#2b9ff0"/><path fill="#e0f0ff" d="M4 6l7 3 5-4-2 6 2 3-5-1-6 4 3-6z" opacity=".9"/></svg>
<svg class="a" style="left:282.5px;top:1051.5px;" width="20" height="20" viewBox="0 0 20 20"><circle cx="10" cy="10" r="7.5" fill="none" stroke="#5f6668" stroke-width="3.5"/><circle cx="10" cy="10" r="3.7" fill="#dfe9e9" stroke="#4fc3a0" stroke-width="2"/></svg>
<svg class="a" style="left:315.0px;top:1052.5px;" width="24" height="18" viewBox="0 0 24 18"><path fill="#8a7d6a" d="M4 8c2-4 8-6 13-4l3-3 1 5c2 2 2 5 0 7l-5 1-7-1c-3 0-5-2-5-5z"/><circle cx="10" cy="9" r="2.3" fill="#fff"/><circle cx="14" cy="8.5" r="2.3" fill="#fff"/><circle cx="10" cy="9" r="1" fill="#222"/><circle cx="14" cy="8.5" r="1" fill="#222"/><path stroke="#333" stroke-width="1.5" d="M17 12l6 5"/><path fill="#222" d="M1 10l4-1v3z"/></svg>
<svg class="a" style="left:350.5px;top:1051.5px;" width="20" height="20" viewBox="0 0 20 20"><rect width="20" height="20" rx="4" fill="#ff8a1a" stroke="#222" stroke-width="1.2"/><path fill="#222" d="M2 4l5 3-5 1zM18 4l-5 3 5 1zM3 15l4-2 1 5zM17 15l-4-2-1 5z"/><ellipse cx="10" cy="10" rx="6" ry="3.5" fill="#fff"/><circle cx="10" cy="10" r="2.8" fill="#2fb040"/><circle cx="10" cy="10" r="1.2" fill="#111"/></svg>
<svg class="a" style="left:384.5px;top:1051.5px;" width="20" height="20" viewBox="0 0 20 20"><circle cx="10" cy="10" r="9.5" fill="#fff"/><path d="M10 2a8 8 0 0 1 8 8" stroke="#2a9af0" stroke-width="1.6" fill="none"/><path d="M10 18a8 8 0 0 1-8-8" stroke="#2fb870" stroke-width="1.6" fill="none"/><path d="M6 7l4 3-4 3M14 7l-4 3 4 3" stroke="#2a9af0" stroke-width="1.4" fill="none"/></svg>
<svg class="a" style="left:418.0px;top:1050.5px;" width="22" height="22" viewBox="0 0 22 22"><rect width="22" height="22" rx="2" fill="#24507a"/><path d="M4 5c4 0 8 4 9 9 1 2 3 3 4 4" stroke="#c0d8ee" stroke-width="1.2" fill="none"/><path d="M15 3l3 2" stroke="#fff" stroke-width="1.5"/></svg>
<svg class="a" style="left:452.5px;top:1053.5px;" width="20" height="16" viewBox="0 0 20 16"><ellipse cx="10" cy="8" rx="9.5" ry="7.5" fill="#e060a0"/><ellipse cx="10" cy="8" rx="5" ry="5" fill="#f4f4f4"/><path fill="#bbb" d="M6 10l3-4 2 3 1-1 2 2z"/></svg>
<svg class="a" style="left:485.5px;top:1050.5px;" width="22" height="22" viewBox="0 0 22 22"><path d="M3 13a8 8 0 0 1 16 0" stroke="#2a6ae0" stroke-width="2.5" fill="none"/><rect x="1.5" y="12" width="4" height="8" rx="1.5" fill="#1d50b8"/><rect x="16.5" y="12" width="4" height="8" rx="1.5" fill="#1d50b8"/><path stroke="#ff5a00" stroke-width="1.5" d="M8 11v9M11 13v7M14 11v9"/><path stroke="#ffcc00" stroke-width="1.2" d="M9.5 14v4M12.5 12v7"/></svg>
<svg class="a" style="left:520.0px;top:1052.5px;" width="22" height="18" viewBox="0 0 22 18"><path fill="#ff7a1a" d="M1 9l7-5-2-2h5l8 6c2 1.5 2 5 0 7-3 3-8 3-10 0L5 12H1z"/><circle cx="13" cy="10" r="4" fill="#fff"/><circle cx="13" cy="10" r="2.3" fill="#2a70c8"/></svg>
<svg class="a" style="left:571.5px;top:1053.5px;" width="24" height="16" viewBox="0 0 24 16"><path fill="#3ddc84" d="M1 15a11 11 0 0 1 22 0z"/><path stroke="#3ddc84" stroke-width="1.6" d="M6 5L4 1.5M18 5l2-3.5"/><circle cx="7.5" cy="10.5" r="1.1" fill="#d3dcdc"/><circle cx="16.5" cy="10.5" r="1.1" fill="#d3dcdc"/></svg>
<svg class="a" style="left:644.5px;top:1052.0px;" width="23" height="19" viewBox="0 0 23 19"><path fill="#a8202c" d="M0 3h8l3-3h12v5H0z"/><path fill="#d32030" d="M0 4h23v15H0z"/><text x="6" y="15" font-size="9" font-style="italic" fill="#fff" font-family="Liberation Sans" font-weight="bold">Fz</text></svg>
<svg class="a" style="left:718.5px;top:1052.5px;" width="19" height="18" viewBox="0 0 19 18"><rect width="19" height="18" fill="#383e44"/><path d="M14 3L6.5 9.5 3.5 7 2.5 7.8 5.5 10 2.5 12.2 3.5 13 6.5 10.5 14 17V3z" fill="#2d96e8"/></svg>
<svg class="a" style="left:788.5px;top:1052.0px;" width="23" height="19" viewBox="0 0 23 19"><path fill="#1e6fc2" d="M0 2h8l2 2h13v15H0z"/><path fill="#fff" d="M0 5h23v2H0z" opacity=".9"/><path fill="#3d9bea" d="M0 7h23v12H0z"/></svg>
<svg class="a" style="left:860.0px;top:1049.5px;" width="24" height="24" viewBox="0 0 24 24"><circle cx="12" cy="13" r="10" fill="#ff7a1f"/><path fill="#ffc02a" d="M14 1c5 3 8 8 7 13l-4-6z"/><circle cx="12" cy="13" r="5.5" fill="#5b3cc4"/><path fill="#ff5a2a" d="M3 11c1 5 5 9 10 9 4 0 7-2 8-6-2 3-6 4-9 3-3-1-5-4-4-7z"/></svg>
<svg class="a" style="left:934.5px;top:1052.5px;" width="19" height="18" viewBox="0 0 19 18"><rect width="19" height="18" rx="1.5" fill="#2f3335"/><path d="M7.5 5l4 4-4 4" stroke="#9aa" stroke-width="1.2" fill="none"/></svg>
<svg class="a" style="left:1006.0px;top:1051.5px;" width="20" height="20" viewBox="0 0 20 20"><circle cx="10" cy="10" r="10" fill="#fff"/><rect x="6" y="4" width="8" height="12" rx="1" fill="none" stroke="#3a7ae0" stroke-width="1.5"/><path fill="#3ddc84" d="M10 7a3 3 0 0 1 0 6z"/></svg>
<svg class="a" style="left:1024.0px;top:1052.5px;" width="20" height="18" viewBox="0 0 20 18"><path fill="#232627" d="M1 6h3l5-4.5v15L4 12H1z"/><circle cx="15" cy="10" r="3.5" fill="none" stroke="#da4453" stroke-width="1.4"/><path stroke="#da4453" stroke-width="1.4" d="M12.5 7.5l5 5"/></svg>
<svg class="a" style="left:1079.5px;top:1050.5px;" width="17" height="22" viewBox="0 0 17 22"><path fill="#23a566" d="M0 0h12l5 5v17H0z"/><path fill="#8ed1a8" d="M12 0v5h5z"/><path fill="none" stroke="#c9f0d8" stroke-width="1" d="M4 9h9v8H4zM8.5 9v8M4 13h9"/></svg>
<svg class="a" style="left:1150.0px;top:1051.5px;" width="20" height="20" viewBox="0 0 20 20"><rect width="20" height="20" rx="4" fill="#25d366"/><circle cx="10" cy="10" r="6" fill="none" stroke="#fff" stroke-width="1.5"/><path fill="#fff" d="M4.5 16l1-3.5 2 2z"/><path fill="#fff" d="M7.5 7.5c0 3 2 5 5 5l1-1-1.5-1-1 .5c-1 0-2-1-2.2-2l.5-1-1-1.5z"/></svg>
<svg class="a" style="left:1220.0px;top:1049.5px;" width="24" height="24" viewBox="0 0 24 24"><circle cx="12" cy="12" r="11" fill="#db4437"/><path fill="#0f9d58" d="M12 23A11 11 0 0 1 1.5 8.5L7 14l5 3z"/><path fill="#ffcd40" d="M22.5 8.5A11 11 0 0 1 12 23l5-8 1-6z"/><circle cx="12" cy="12" r="5" fill="#fff"/><circle cx="12" cy="12" r="3.8" fill="#4285f4"/></svg>
<svg class="a" style="left:1294.0px;top:1051.5px;" width="20" height="20" viewBox="0 0 20 20"><circle cx="10" cy="10" r="9.5" fill="#2f7ee8"/><text x="2.5" y="14" font-size="10" fill="#fff" font-family="Liberation Sans">qb</text></svg>
<svg class="a" style="left:1366.0px;top:1051.5px;" width="18" height="20" viewBox="0 0 18 20"><path fill="#f7a11c" d="M7.5 1h3l5 14H2.5z"/><path fill="#fff" d="M6.4 5h5.2l1 3H5.4z"/><path fill="#fff" d="M4.8 10.5h8.4l.9 2.4H3.9z"/><path fill="#ef8a00" d="M0.5 15.5h17v3.5H0.5z"/></svg>
<svg class="a" style="left:1432.0px;top:1048.5px;" width="26" height="26" viewBox="0 0 26 26"><circle cx="13" cy="14" r="11" fill="#ff6f20"/><path fill="#ffbd2e" d="M16 1c5 3 9 9 8 14l-5-7z"/><circle cx="13" cy="14" r="6" fill="#6a3ad0"/><path fill="#ff4b3a" d="M3 12c1 6 6 10 11 10 4 0 8-3 9-7-2 3-7 5-10 4-4-1-6-5-5-8z"/></svg>
<svg class="a" style="left:1470.0px;top:1051.5px;" width="20" height="20" viewBox="0 0 20 20"><rect width="20" height="20" fill="#ef443b"/><path fill="#fff" d="M5.5 10l3.5-3.5 3.5 3.5-3.5 3.5z"/><path fill="none" stroke="#fff" stroke-width="2" d="M11.5 5.5l4.5 4.5-4.5 4.5"/></svg>
<div class="t " style="left:1496px;top:1057.00px;font-size:13px;color:#3b4a7a;font-weight:bold;">EN</div>
<svg class="a" style="left:1523.5px;top:1053.0px;" width="17" height="17" viewBox="0 0 17 17"><circle cx="8.5" cy="8.5" r="7.5" fill="none" stroke="#232627" stroke-width="1.3"/><path stroke="#232627" stroke-width="1.8" d="M6.5 5.5v6M10.5 5.5v6"/></svg>
<svg class="a" style="left:1548.0px;top:1051.5px;" width="20" height="20" viewBox="0 0 20 20"><circle cx="10" cy="10" r="9.5" fill="#4a8fe8"/><text x="2.8" y="14" font-size="10" fill="#e8f2ff" font-family="Liberation Sans">qb</text></svg>
<svg class="a" style="left:1575.0px;top:1051.5px;" width="20" height="20" viewBox="0 0 20 20"><circle cx="10" cy="10" r="9" fill="#2ea5e0"/><path fill="#fff" d="M4 10l11-5-2 10-3-2-2 2v-3z"/><rect x="8" y="11" width="12" height="9" rx="1.5" fill="#7a7a7a"/><text x="8.6" y="18.5" font-size="6.5" fill="#fff" font-family="Liberation Sans">174</text></svg>
<svg class="a" style="left:1602.0px;top:1052.5px;" width="16" height="18" viewBox="0 0 16 18"><path fill="none" stroke="#232627" stroke-width="1.4" d="M6.5 1.5h3L14 15H2z"/><path fill="#232627" d="M0.5 15.5h15v2H0.5zM5.3 6h5.4l.7 2H4.6zM3.8 10.5h8.4l.7 2H3.1z"/></svg>
<svg class="a" style="left:1628.5px;top:1052.5px;" width="15" height="18" viewBox="0 0 15 18"><rect x="1" y="3" width="13" height="14" fill="none" stroke="#232627" stroke-width="1.3"/><rect x="4" y="1" width="7" height="4" fill="#232627"/><path stroke="#232627" stroke-width="1" d="M3.5 8h8M3.5 10.5h8M3.5 13h5"/></svg>
<svg class="a" style="left:1653.0px;top:1052.5px;" width="18" height="18" viewBox="0 0 18 18"><path fill="#232627" d="M1 6h3l5-4.5v15L4 12H1z"/><path fill="none" stroke="#232627" stroke-width="1.4" d="M11.5 5.5c1.5 2 1.5 5 0 7M14 3.5c2.5 3 2.5 8 0 11"/></svg>
<svg class="a" style="left:1677.0px;top:1053.5px;" width="22" height="16" viewBox="0 0 22 16"><rect width="22" height="16" fill="#fff"/><path stroke="#c8102e" stroke-width="1.25" d="M0 1h22M0 3.5h22M0 6h22M0 8.5h22M0 11h22M0 13.5h22M0 15.4h22"/><rect width="9.5" height="8" fill="#3c3b6e"/><path stroke="#fff" stroke-width=".8" stroke-dasharray="1 1.2" d="M1 2h8M1 4h8M1 6h8"/></svg>
<svg class="a" style="left:1704.0px;top:1051.5px;" width="18" height="20" viewBox="0 0 18 20"><rect x="3" y="1" width="6" height="11" rx="3" fill="#232627"/><path fill="none" stroke="#232627" stroke-width="1.3" d="M1 8a5 5 0 0 0 10 0M6 13v5M3 18.5h6"/><path fill="none" stroke="#888" stroke-width="1" d="M13 7c1 1.5 1 3.5 0 5M15 5.5c1.5 2.5 1.5 5.5 0 8"/></svg>
<svg class="a" style="left:1729.0px;top:1052.5px;" width="22" height="18" viewBox="0 0 22 18"><g fill="none" stroke="#232627" stroke-width="1.2"><path d="M1 6a14 14 0 0 1 20 0"/><path d="M4 9.5a9 9 0 0 1 14 0"/><path d="M7 12.5a5 5 0 0 1 8 0"/></g><circle cx="11" cy="15.5" r="1.5" fill="none" stroke="#232627" stroke-width="1"/></svg>
<svg class="a" style="left:1759.0px;top:1057.5px;" width="14" height="8" viewBox="0 0 14 8"><path fill="#232627" d="M7 0.5L13.5 7.5H0.5z"/></svg>
<svg class="a" style="left:1889px;top:1050px;" width="26" height="24" viewBox="0 0 26 24"><rect x="1" y="1" width="24" height="22" fill="none" stroke="#232627" stroke-width="1.6"/><path stroke="#232627" stroke-width="1.3" d="M3.5 20h19"/></svg>
</body></html>
